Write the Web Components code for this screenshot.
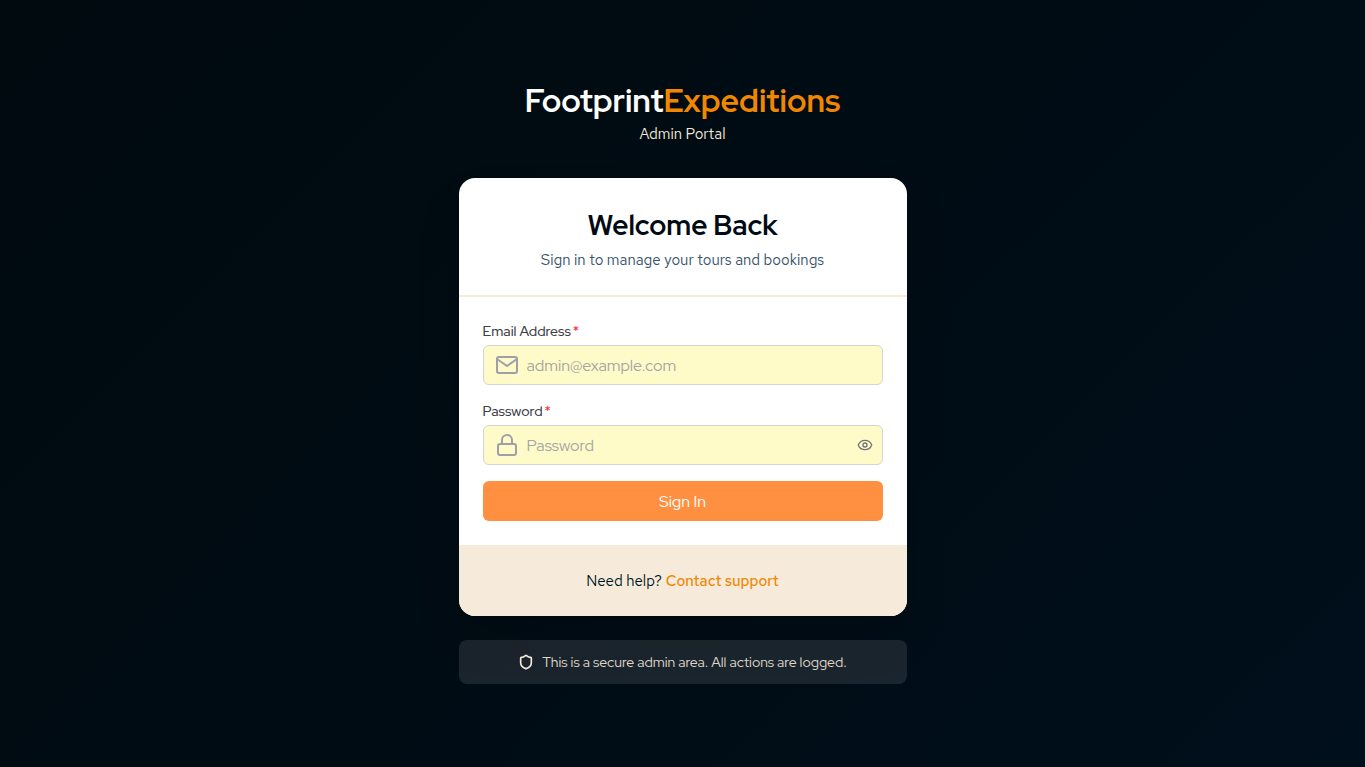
<!DOCTYPE html>
<html lang="en">
<head>
<meta charset="utf-8">
<meta name="viewport" content="width=device-width, initial-scale=1">
<title>Footprint Expeditions - Admin Portal</title>
<style>
  body {
    margin: 0;
    font-family: "Red Hat Display", Lato, sans-serif;
    font-size: 16px;
    line-height: 24px;
    --navy: #000b13;
    --orange: #f18700;
    --sand: #f6eada;
    --text-font: "Red Hat Text", Lato, sans-serif;
  }
</style>
</head>
<body>
<admin-login-page>
  <brand-logo slot="brand">
    <span slot="first">Footprint</span>
    <span slot="second">Expeditions</span>
    <span slot="tagline">Admin Portal</span>
  </brand-logo>
  <login-card>
    <span slot="title">Welcome Back</span>
    <span slot="subtitle">Sign in to manage your tours and bookings</span>
    <form-field label="Email Address" type="email" placeholder="admin@example.com">
      <svg slot="icon" width="24" height="24" viewBox="0 0 24 24" fill="none" stroke="currentColor" stroke-width="2" stroke-linecap="round" stroke-linejoin="round"><path d="M4 4h16a2 2 0 0 1 2 2v12a2 2 0 0 1-2 2H4a2 2 0 0 1-2-2V6a2 2 0 0 1 2-2z"/><path d="m22 6-10 7L2 6"/></svg>
    </form-field>
    <form-field label="Password" type="password" placeholder="Password">
      <svg slot="icon" width="24" height="24" viewBox="0 0 24 24" fill="none" stroke="currentColor" stroke-width="2" stroke-linecap="round" stroke-linejoin="round"><rect x="3" y="11" width="18" height="11" rx="2"/><path d="M7 11V7a5 5 0 0 1 10 0v4"/></svg>
    </form-field>
    <submit-button>Sign In</submit-button>
    <span slot="help">Need help?</span>
    <support-link slot="help" href="#support">Contact support</support-link>
  </login-card>
  <security-notice slot="notice">This is a secure admin area. All actions are logged.</security-notice>
</admin-login-page>

<script>
  function attach(element, html) {
    const template = document.createElement('template');
    template.innerHTML = html;
    const root = element.attachShadow({ mode: 'open' });
    root.appendChild(template.content.cloneNode(true));
    return root;
  }

  class AdminLoginPage extends HTMLElement {
    constructor() {
      super();
      attach(this, `
        <style>
          :host {
            display: flex;
            justify-content: center;
            align-items: center;
            box-sizing: border-box;
            min-height: 100vh;
            padding: 15px 16px 16px;
            background: linear-gradient(135deg, #000a0f 0%, #000c14 50%, #000f1c 100%);
          }
          main {
            display: flex;
            flex-direction: column;
            width: 100%;
            max-width: 448px;
          }
          .card { margin: 32px 0 24px; }
        </style>
        <main>
          <slot name="brand"></slot>
          <div class="card"><slot></slot></div>
          <slot name="notice"></slot>
        </main>
      `);
    }
  }

  class BrandLogo extends HTMLElement {
    constructor() {
      super();
      attach(this, `
        <style>
          :host { display: block; text-align: center; color: var(--sand); }
          h1 {
            display: flex;
            justify-content: center;
            margin: 0 0 2px;
            font-size: 32px;
            line-height: 38px;
            font-weight: 700;
            color: #fff;
          }
          .second { color: var(--orange); }
          p { margin: 0; font-family: var(--text-font); font-size: 15px; }
        </style>
        <h1><slot name="first"></slot><span class="second"><slot name="second"></slot></span></h1>
        <p><slot name="tagline"></slot></p>
      `);
    }
  }

  class LoginCard extends HTMLElement {
    constructor() {
      super();
      attach(this, `
        <style>
          :host {
            display: block;
            overflow: hidden;
            border-radius: 16px;
            background: #fff;
            box-shadow: 0 24px 48px -12px rgba(0, 0, 0, 0.25);
          }
          header {
            padding: 28px 24px 23px;
            border-bottom: 2px solid var(--sand);
            text-align: center;
            color: #38536a;
          }
          h2 {
            margin: 0 0 4px;
            font-size: 28px;
            line-height: 38px;
            font-weight: 700;
            color: var(--navy);
          }
          p { margin: 0; font-family: var(--text-font); font-size: 15px; }
          form {
            display: flex;
            flex-direction: column;
            gap: 16px;
            padding: 24px;
          }
          footer {
            display: flex;
            justify-content: center;
            gap: 4px;
            padding: 24px 24px 23px;
            background: var(--sand);
            font-family: var(--text-font);
            font-size: 15px;
            color: #001522;
          }
        </style>
        <header>
          <h2><slot name="title"></slot></h2>
          <p><slot name="subtitle"></slot></p>
        </header>
        <form><slot></slot></form>
        <footer><slot name="help"></slot></footer>
      `);
    }
  }

  class FormField extends HTMLElement {
    constructor() {
      super();
      this.root = attach(this, `
        <style>
          :host { display: block; }
          label {
            display: flex;
            gap: 2px;
            margin-bottom: 4px;
            font-size: 14px;
            line-height: 20px;
            font-weight: 500;
            color: #3f3f46;
          }
          .star { color: #fb2c36; }
          .box {
            display: flex;
            align-items: center;
            box-sizing: border-box;
            height: 40px;
            padding: 0 9px 0 11px;
            border: 1px solid #d4d4d8;
            border-radius: 6px;
            background: #fffbc8;
            color: #9f9fa9;
          }
          .box:focus-within { border-color: var(--orange); }
          input {
            flex: 1;
            min-width: 0;
            padding: 2px 8px 0;
            border: 0;
            outline: 0;
            background: none;
            font: inherit;
            color: #1e2939;
          }
          input::placeholder { color: #a6a6a6; opacity: 1; }
          button {
            display: flex;
            padding: 0;
            border: 0;
            background: none;
            color: #71717b;
            cursor: pointer;
          }
          button[hidden] { display: none; }
        </style>
        <label for="input"><span class="text"></span><span class="star">*</span></label>
        <div class="box">
          <slot name="icon"></slot>
          <input id="input" required>
          <button type="button" aria-label="Show password" hidden>
            <svg width="16" height="16" viewBox="0 0 24 24" fill="none" stroke="currentColor" stroke-width="2" stroke-linecap="round" stroke-linejoin="round"><path d="M2.06 12.35a1 1 0 0 1 0-.7 10.75 10.75 0 0 1 19.88 0 1 1 0 0 1 0 .7 10.75 10.75 0 0 1-19.88 0"/><circle cx="12" cy="12" r="3"/></svg>
          </button>
        </div>
      `);
      this.$input = this.root.querySelector('input');
      this.$toggle = this.root.querySelector('button');
      this.$toggle.addEventListener('click', () => {
        this.$input.type = this.$input.type === 'password' ? 'text' : 'password';
      });
    }

    connectedCallback() {
      this.root.querySelector('.text').textContent = this.getAttribute('label');
      this.$input.type = this.getAttribute('type');
      this.$input.placeholder = this.getAttribute('placeholder');
      this.$toggle.hidden = this.getAttribute('type') !== 'password';
    }
  }

  class SubmitButton extends HTMLElement {
    constructor() {
      super();
      attach(this, `
        <style>
          :host { display: block; }
          button {
            width: 100%;
            height: 40px;
            padding: 2px 8px 0;
            border: 0;
            border-radius: 6px;
            background: #ff9041;
            font: inherit;
            color: #fff;
            cursor: pointer;
          }
        </style>
        <button type="submit"><slot></slot></button>
      `);
    }
  }

  class SupportLink extends HTMLElement {
    constructor() {
      super();
      this.root = attach(this, `
        <style>
          :host { display: inline-block; }
          a { color: var(--orange); text-decoration: none; font-weight: 500; }
          a:hover { text-decoration: underline; }
        </style>
        <a><slot></slot></a>
      `);
    }

    connectedCallback() {
      this.root.querySelector('a').href = this.getAttribute('href');
    }
  }

  class SecurityNotice extends HTMLElement {
    constructor() {
      super();
      attach(this, `
        <style>
          :host {
            display: flex;
            justify-content: center;
            align-items: center;
            gap: 8px;
            padding: 12px;
            border-radius: 8px;
            background: rgba(255, 255, 255, 0.1);
            font-size: 14px;
            line-height: 20px;
            color: #dfd6c9;
          }
          svg { color: var(--sand); }
        </style>
        <svg width="16" height="16" viewBox="0 0 24 24" fill="none" stroke="currentColor" stroke-width="2.5" stroke-linecap="round" stroke-linejoin="round"><path d="M20 13c0 5-3.5 7.5-7.66 8.95a1 1 0 0 1-.67-.01C7.5 20.5 4 18 4 13V6a1 1 0 0 1 1-1c2 0 4.5-1.2 6.24-2.72a1.17 1.17 0 0 1 1.52 0C14.51 3.81 17 5 19 5a1 1 0 0 1 1 1z"/></svg>
        <span><slot></slot></span>
      `);
    }
  }

  customElements.define('admin-login-page', AdminLoginPage);
  customElements.define('brand-logo', BrandLogo);
  customElements.define('login-card', LoginCard);
  customElements.define('form-field', FormField);
  customElements.define('submit-button', SubmitButton);
  customElements.define('support-link', SupportLink);
  customElements.define('security-notice', SecurityNotice);
</script>
</body>
</html>
